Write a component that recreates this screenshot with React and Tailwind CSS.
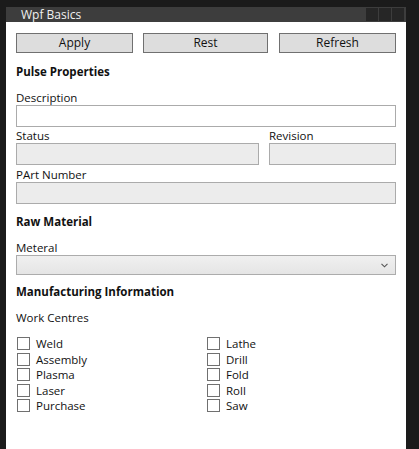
import React from "react";

const font = { fontFamily: '"Open Sans", "Liberation Sans", sans-serif' };

const Label = ({ children, className = "" }) => (
  <div className={`h-[16px] flex items-end text-[11.5px] leading-[15px] text-[#111] ${className}`}>
    {children}
  </div>
);

const Heading = ({ children, className = "" }) => (
  <div className={`h-[16px] flex items-center text-[11.5px] font-bold text-[#111] ${className}`}>
    {children}
  </div>
);

const Box = ({ disabled, className = "" }) => (
  <div
    className={`h-[22px] border border-[#ababab] ${disabled ? "bg-[#ececec]" : "bg-white"} ${className}`}
  />
);

const Check = ({ label }) => (
  <div className="h-[15.5px] flex items-center gap-[6px]">
    <div className="w-[13px] h-[13px] border border-[#707070] bg-white shrink-0" />
    <span className="text-[11.5px] leading-none text-[#111]">{label}</span>
  </div>
);

export default function App() {
  const left = ["Weld", "Assembly", "Plasma", "Laser", "Purchase"];
  const right = ["Lathe", "Drill", "Fold", "Roll", "Saw"];

  return (
    <div className="w-[419px] h-[449px] bg-[#1b1b1b] pt-[7px] pl-[6px] overflow-hidden" style={font}>
      <div className="w-[400px] h-[442px] flex flex-col bg-white">
        {/* title bar */}
        <div className="h-[15px] bg-[#3d3d3d] flex items-center pl-[15px] pr-[2px]">
          <span className="text-[12px] text-[#f0f0f0] leading-none">Wpf Basics</span>
          <div className="ml-auto flex gap-[1px]">
            <div className="w-[12px] h-[13px] bg-[#262626]" />
            <div className="w-[12px] h-[13px] bg-[#262626]" />
            <div className="w-[12px] h-[13px] bg-[#262626]" />
          </div>
        </div>

        <div className="flex flex-col px-[10px]">
          <div className="mt-[11px] flex h-[20px] text-[12px] text-[#111]">
            <button className="w-[117px] border border-[#707070] bg-[#dddddd] leading-none">Apply</button>
            <button className="ml-[10px] w-[125px] border border-[#707070] bg-[#dddddd] leading-none">Rest</button>
            <button className="ml-[11px] w-[117px] border border-[#707070] bg-[#dddddd] leading-none">Refresh</button>
          </div>

          <Heading className="mt-[11px]">Pulse Properties</Heading>

          <Label className="mt-[9px]">Description</Label>
          <Box />

          <div className="flex gap-[10px]">
            <div className="w-[243px] flex flex-col">
              <Label>Status</Label>
              <Box disabled />
            </div>
            <div className="flex-1 flex flex-col">
              <Label>Revision</Label>
              <Box disabled />
            </div>
          </div>

          <Label className="h-[17px]">PArt Number</Label>
          <Box disabled />

          <Heading className="mt-[10px]">Raw Material</Heading>

          <Label className="mt-[9px] h-[16px]">Meteral</Label>
          <div className="h-[20px] border border-[#acacac] bg-gradient-to-b from-[#f0f0f0] to-[#e5e5e5] flex items-center justify-end pr-[7px]">
            <svg width="7" height="5" viewBox="0 0 7 5">
              <path d="M0.5 0.8 L3.5 3.8 L6.5 0.8" fill="none" stroke="#555" strokeWidth="1.1" />
            </svg>
          </div>

          <Heading className="mt-[9px]">Manufacturing Information</Heading>

          <div className="mt-[10px] h-[16px] flex items-center text-[11.5px] text-[#111]">Work Centres</div>

          <div className="mt-[10px] flex pl-[1px]">
            <div className="w-[190px] flex flex-col">
              {left.map((l) => (
                <Check key={l} label={l} />
              ))}
            </div>
            <div className="flex flex-col">
              {right.map((l) => (
                <Check key={l} label={l} />
              ))}
            </div>
          </div>
        </div>
      </div>
    </div>
  );
}
